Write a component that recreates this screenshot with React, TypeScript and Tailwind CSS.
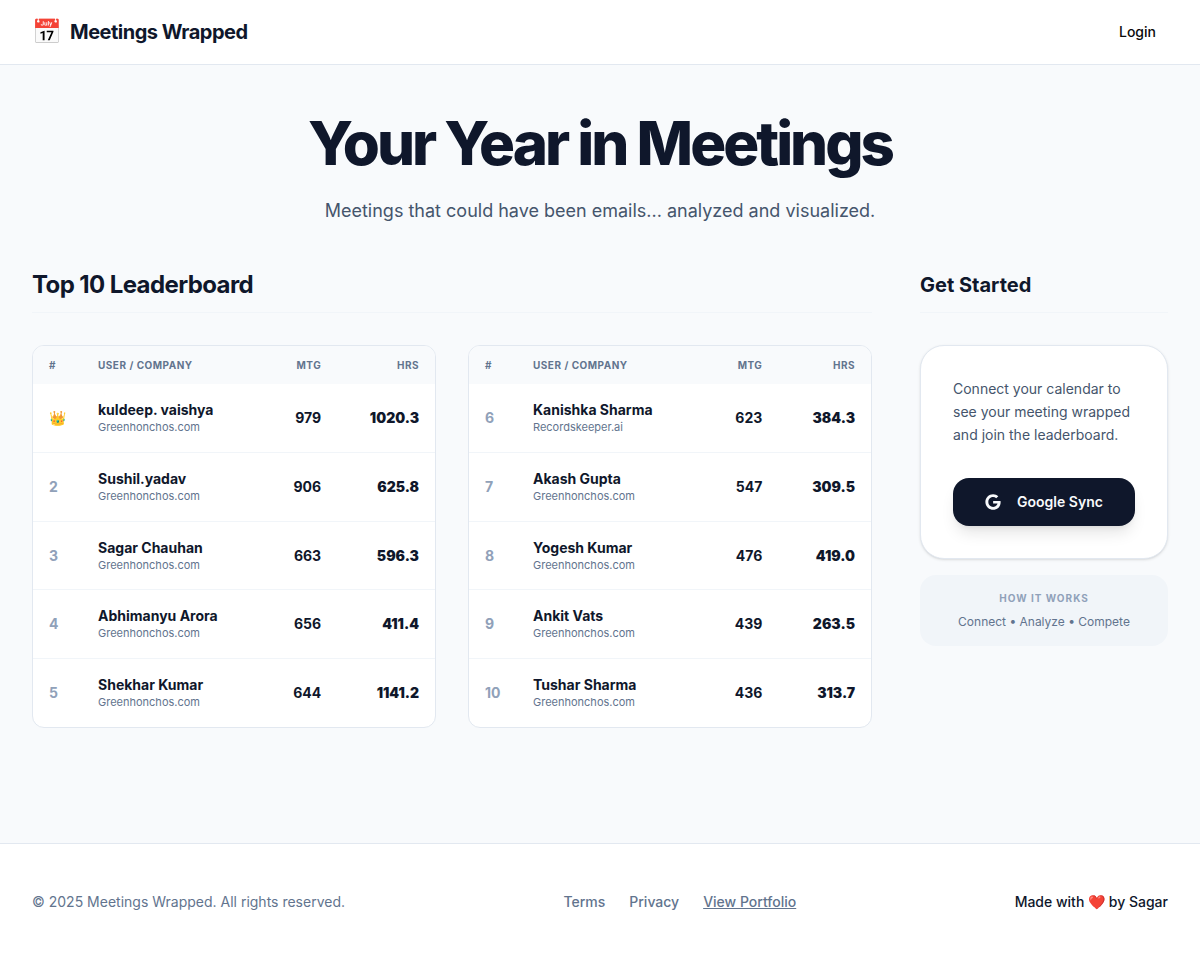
import { FaGoogle } from "react-icons/fa";

type Entry = {
  rank: number;
  name: string;
  company: string;
  meetings: number;
  hours: string;
};

const LEADERBOARD: Entry[] = [
  { rank: 1, name: "kuldeep. vaishya", company: "Greenhonchos.com", meetings: 979, hours: "1020.3" },
  { rank: 2, name: "Sushil.yadav", company: "Greenhonchos.com", meetings: 906, hours: "625.8" },
  { rank: 3, name: "Sagar Chauhan", company: "Greenhonchos.com", meetings: 663, hours: "596.3" },
  { rank: 4, name: "Abhimanyu Arora", company: "Greenhonchos.com", meetings: 656, hours: "411.4" },
  { rank: 5, name: "Shekhar Kumar", company: "Greenhonchos.com", meetings: 644, hours: "1141.2" },
  { rank: 6, name: "Kanishka Sharma", company: "Recordskeeper.ai", meetings: 623, hours: "384.3" },
  { rank: 7, name: "Akash Gupta", company: "Greenhonchos.com", meetings: 547, hours: "309.5" },
  { rank: 8, name: "Yogesh Kumar", company: "Greenhonchos.com", meetings: 476, hours: "419.0" },
  { rank: 9, name: "Ankit Vats", company: "Greenhonchos.com", meetings: 439, hours: "263.5" },
  { rank: 10, name: "Tushar Sharma", company: "Greenhonchos.com", meetings: 436, hours: "313.7" },
];

function LeaderboardTable({ entries }: { entries: Entry[] }) {
  return (
    <div className="overflow-hidden rounded-xl border border-slate-200 bg-white">
      <table className="w-full text-left text-sm">
        <thead className="bg-slate-50 text-[10px] tracking-wider text-slate-500 uppercase">
          <tr>
            <th className="w-12 px-4 py-3 font-bold">#</th>
            <th className="px-4 py-3 font-bold">User / Company</th>
            <th className="px-4 py-3 text-right font-bold">Mtg</th>
            <th className="px-4 py-3 text-right font-bold">Hrs</th>
          </tr>
        </thead>
        <tbody className="divide-y divide-slate-100">
          {entries.map((entry) => (
            <tr key={entry.rank}>
              <td className="px-4 py-4 font-bold text-slate-400">
                {entry.rank === 1 ? "👑" : entry.rank}
              </td>
              <td className="px-4 py-4">
                <div className="font-bold text-slate-900">{entry.name}</div>
                <div className="text-[11px] text-slate-500">{entry.company}</div>
              </td>
              <td className="px-4 py-4 text-right font-bold text-slate-900">{entry.meetings}</td>
              <td className="px-4 py-4 text-right font-black text-slate-900">{entry.hours}</td>
            </tr>
          ))}
        </tbody>
      </table>
    </div>
  );
}

export default function App() {
  return (
    <div className="flex min-h-screen flex-col bg-slate-50 font-['Inter',sans-serif] text-slate-900">
      <header className="border-b border-slate-200 bg-white">
        <div className="mx-auto flex h-16 max-w-7xl items-center justify-between px-8">
          <a href="#" className="flex items-center gap-2">
            <span className="text-2xl">📅</span>
            <span className="text-xl font-bold tracking-tight">Meetings Wrapped</span>
          </a>
          <button type="button" className="h-8 px-3 text-sm font-medium text-neutral-950">
            Login
          </button>
        </div>
      </header>

      <main className="mx-auto w-full max-w-7xl grow px-8 py-12">
        <div className="mb-12 text-center">
          <h1 className="mb-6 text-6xl leading-none font-extrabold tracking-tighter">
            Your Year in Meetings
          </h1>
          <p className="text-lg leading-7 text-slate-600">
            Meetings that could have been emails... analyzed and visualized.
          </p>
        </div>

        <div className="grid grid-cols-1 gap-12 md:grid-cols-4">
          <section className="md:col-span-3">
            <div className="mb-8 h-10 border-b border-slate-100">
              <h2 className="text-2xl leading-6 font-bold tracking-tight">Top 10 Leaderboard</h2>
            </div>
            <div className="grid grid-cols-1 gap-8 md:grid-cols-2">
              <LeaderboardTable entries={LEADERBOARD.slice(0, 5)} />
              <LeaderboardTable entries={LEADERBOARD.slice(5)} />
            </div>
          </section>

          <aside>
            <div className="mb-8 h-10 border-b border-slate-100">
              <h2 className="text-xl leading-6 font-bold">Get Started</h2>
            </div>
            <div className="rounded-3xl border border-slate-200 bg-white p-8 shadow-sm">
              <p className="mb-8 text-sm leading-relaxed text-slate-600">
                Connect your calendar to see your meeting wrapped and join the leaderboard.
              </p>
              <button
                type="button"
                className="flex h-12 w-full items-center justify-center gap-4 rounded-2xl bg-slate-900 text-sm font-semibold text-slate-50 shadow-lg"
              >
                <FaGoogle className="size-4" aria-hidden="true" />
                Google Sync
              </button>
            </div>
            <div className="mt-4 rounded-2xl bg-slate-100 p-4 text-center">
              <h3 className="mb-2 text-[10px] leading-[15px] font-bold tracking-widest text-slate-400 uppercase">
                How it works
              </h3>
              <p className="text-xs text-slate-500">Connect • Analyze • Compete</p>
            </div>
          </aside>
        </div>
      </main>

      <footer className="border-t border-slate-200 bg-white py-12">
        <div className="mx-auto flex max-w-7xl flex-wrap items-center justify-between px-8 text-sm">
          <p className="text-slate-500">© 2025 Meetings Wrapped. All rights reserved.</p>
          <nav className="flex gap-6 font-medium text-slate-500">
            <a href="#">Terms</a>
            <a href="#">Privacy</a>
            <a href="#" className="underline">
              View Portfolio
            </a>
          </nav>
          <p className="font-medium">Made with ❤️ by Sagar</p>
        </div>
      </footer>
    </div>
  );
}
